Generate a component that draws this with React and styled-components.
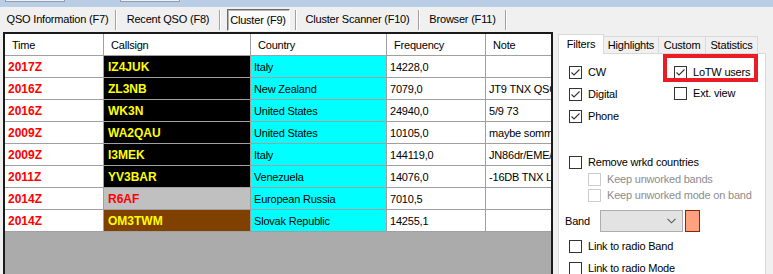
import styled, { createGlobalStyle } from 'styled-components'

const GlobalStyle = createGlobalStyle`
  html, body {
    margin: 0;
    padding: 0;
  }
  body {
    width: 773px;
    height: 274px;
    overflow: hidden;
    background: #f0f0f0;
    font-family: 'Liberation Sans', Arial, sans-serif;
    font-size: 11px;
    letter-spacing: -0.2px;
    color: #000;
  }
`

const Window = styled.div`
  display: flex;
  flex-direction: column;
  height: 274px;
  overflow: hidden;
`

const TopBar = styled.div`
  height: 7px;
  flex-shrink: 0;
  background: #b9cde5;
  display: flex;
  gap: 55px;
  padding-left: 5px;
`

const TopStub = styled.div`
  width: 58px;
  height: 1px;
  background: #f0f0f0;
  border: 1px solid #8d9db2;
  border-top: none;
`

const ToolStrip = styled.div`
  height: 25px;
  flex-shrink: 0;
  display: flex;
  align-items: center;
`

const ToolTab = styled.div`
  width: ${p => p.$w}px;
  height: 25px;
  display: flex;
  align-items: center;
  justify-content: center;
  padding-bottom: 1px;
  box-sizing: border-box;
  white-space: nowrap;
`

const ToolTabActive = styled.div`
  width: 63px;
  height: 22px;
  margin-top: 1px;
  box-sizing: border-box;
  display: flex;
  align-items: center;
  justify-content: center;
  background: #fafafa;
  border-top: 1px solid #6b6b6b;
  border-left: 1px solid #6b6b6b;
  border-bottom: 1px solid #fff;
  border-right: 1px solid #fff;
  box-shadow: inset 1px 1px 0 #b4b4b4;
`

const Separator = styled.div`
  width: 1px;
  height: 20px;
  background: #a0a0a0;
  border-right: 1px solid #fff;
`

const Main = styled.div`
  flex: 1;
  display: flex;
  align-items: flex-start;
  overflow: hidden;
`

const Grid = styled.div`
  margin-left: 3px;
  width: 550px;
  height: 260px;
  box-sizing: border-box;
  border: 2px solid #1a1a1a;
  background: #ababab;
  overflow: hidden;
`

const GridRow = styled.div`
  display: grid;
  grid-template-columns: 99px 147px 136px 99px 1fr;
  height: 22px;
`

const Cell = styled.div`
  display: flex;
  align-items: center;
  box-sizing: border-box;
  padding-left: ${p => p.$pad ?? 3}px;
  border-right: 1px solid #a0a0a0;
  border-bottom: 1px solid #a0a0a0;
  background: ${p => p.$bg || '#fff'};
  color: ${p => p.$color || '#000'};
  font-size: ${p => (p.$bold ? 12 : 11)}px;
  font-weight: ${p => (p.$bold ? 700 : 400)};
  letter-spacing: ${p => (p.$bold ? 0 : -0.2)}px;
  white-space: nowrap;
  overflow: hidden;

  &:last-child {
    border-right: none;
  }
`

const HeadCell = styled(Cell)`
  padding-left: 7px;
`

const Side = styled.div`
  margin-left: 5px;
  margin-top: 1px;
  width: 208px;
  height: 250px;
  display: flex;
  flex-direction: column;
`

const PanelTabs = styled.div`
  height: 20px;
  display: flex;
  align-items: flex-end;
`

const PanelTab = styled.div`
  width: ${p => p.$w}px;
  height: ${p => (p.$active ? 20 : 17)}px;
  margin-bottom: ${p => (p.$active ? -1 : 0)}px;
  margin-left: ${p => (p.$first ? 0 : -1)}px;
  box-sizing: border-box;
  display: flex;
  align-items: center;
  justify-content: center;
  border: 1px solid #d9d9d9;
  border-bottom: none;
  background: ${p => (p.$active ? '#fff' : '#f0f0f0')};
  position: relative;
  z-index: ${p => (p.$active ? 1 : 0)};
  padding-bottom: ${p => (p.$active ? 2 : 0)}px;
`

const PanelBody = styled.div`
  flex: 1;
  position: relative;
  background: #fff;
  border: 1px solid #d9d9d9;
  padding: 7px 0 0 10px;
`

const Columns = styled.div`
  display: flex;
`

const Column = styled.div`
  width: ${p => p.$w}px;
  display: flex;
  flex-direction: column;
`

const CheckRow = styled.div`
  height: ${p => p.$h || 22}px;
  margin-top: ${p => p.$mt || 0}px;
  padding-left: ${p => p.$indent || 0}px;
  display: flex;
  align-items: center;
  gap: 6px;
  white-space: nowrap;
  color: ${p => (p.$disabled ? '#8d8d8d' : '#000')};
`

const Box = styled.span`
  width: 13px;
  height: 13px;
  box-sizing: border-box;
  border: 1px solid ${p => (p.$disabled ? '#cccccc' : '#333')};
  background: #fff;
  display: inline-flex;
  align-items: center;
  justify-content: center;
  flex-shrink: 0;
`

const Highlight = styled.div`
  position: absolute;
  left: 104px;
  top: 0;
  width: 95px;
  height: 28px;
  box-sizing: border-box;
  border: 4px solid #ec1c24;
`

const BandRow = styled.div`
  height: 22px;
  margin-top: 7px;
  margin-left: -4px;
  display: flex;
  align-items: center;
`

const BandLabel = styled.span`
  width: 35px;
`

const Combo = styled.div`
  width: 83px;
  height: 22px;
  box-sizing: border-box;
  background: #e3e3e3;
  border: 1px solid #adadad;
  display: flex;
  align-items: center;
  justify-content: flex-end;
  padding-right: 6px;
`

const Swatch = styled.div`
  width: 15px;
  height: 22px;
  margin-left: 2px;
  box-sizing: border-box;
  background: #ffa07e;
  border: 1px solid #7f2a0a;
`

function Checkbox({ checked, disabled }) {
  return (
    <Box $disabled={disabled}>
      {checked && (
        <svg width="11" height="11" viewBox="0 0 11 11">
          <polyline points="1.5,5.5 4,8 9.5,2.5" fill="none" stroke="#333" strokeWidth="1.1" />
        </svg>
      )}
    </Box>
  )
}

function Check({ label, checked, disabled, h, mt, indent }) {
  return (
    <CheckRow $h={h} $mt={mt} $indent={indent} $disabled={disabled}>
      <Checkbox checked={checked} disabled={disabled} />
      <span>{label}</span>
    </CheckRow>
  )
}

const spots = [
  { time: '2017Z', call: 'IZ4JUK', country: 'Italy', freq: '14228,0', note: '' },
  { time: '2016Z', call: 'ZL3NB', country: 'New Zealand', freq: '7079,0', note: 'JT9 TNX QSO' },
  { time: '2016Z', call: 'WK3N', country: 'United States', freq: '24940,0', note: '5/9 73' },
  { time: '2009Z', call: 'WA2QAU', country: 'United States', freq: '10105,0', note: 'maybe sommerfest' },
  { time: '2009Z', call: 'I3MEK', country: 'Italy', freq: '144119,0', note: 'JN86dr/EME/JT65' },
  { time: '2011Z', call: 'YV3BAR', country: 'Venezuela', freq: '14076,0', note: '-16DB TNX LoTW' },
  { time: '2014Z', call: 'R6AF', country: 'European Russia', freq: '7010,5', note: '', bg: '#c0c0c0', color: '#ff0000' },
  { time: '2014Z', call: 'OM3TWM', country: 'Slovak Republic', freq: '14255,1', note: '', bg: '#804000' },
]

export default function App() {
  return (
    <Window>
      <GlobalStyle />
      <TopBar>
        <TopStub />
        <TopStub />
      </TopBar>
      <ToolStrip>
        <ToolTab $w={115}>QSO Information (F7)</ToolTab>
        <Separator />
        <ToolTab $w={102}>Recent QSO (F8)</ToolTab>
        <Separator />
        <ToolTab $w={74}>
          <ToolTabActive>Cluster (F9)</ToolTabActive>
        </ToolTab>
        <Separator />
        <ToolTab $w={121}>Cluster Scanner (F10)</ToolTab>
        <Separator />
        <ToolTab $w={85}>Browser (F11)</ToolTab>
        <Separator />
      </ToolStrip>
      <Main>
        <Grid>
          <GridRow>
            <HeadCell>Time</HeadCell>
            <HeadCell>Callsign</HeadCell>
            <HeadCell>Country</HeadCell>
            <HeadCell>Frequency</HeadCell>
            <HeadCell>Note</HeadCell>
          </GridRow>
          {spots.map((s, i) => (
            <GridRow key={i}>
              <Cell $bold $color="#ff0000">{s.time}</Cell>
              <Cell $bold $pad={4} $bg={s.bg || '#000'} $color={s.color || '#ffff00'}>{s.call}</Cell>
              <Cell $bg="#00ffff">{s.country}</Cell>
              <Cell>{s.freq}</Cell>
              <Cell>{s.note}</Cell>
            </GridRow>
          ))}
        </Grid>
        <Side>
          <PanelTabs>
            <PanelTab $w={46} $first $active>Filters</PanelTab>
            <PanelTab $w={56}>Highlights</PanelTab>
            <PanelTab $w={48}>Custom</PanelTab>
            <PanelTab $w={53}>Statistics</PanelTab>
          </PanelTabs>
          <PanelBody>
            <Highlight />
            <Columns>
              <Column $w={105}>
                <Check label="CW" checked />
                <Check label="Digital" checked />
                <Check label="Phone" checked />
              </Column>
              <Column $w={90}>
                <Check label="LoTW users" checked h={20} mt={1} />
                <Check label="Ext. view" />
              </Column>
            </Columns>
            <Check label="Remove wrkd countries" h={18} mt={26} />
            <Check label="Keep unworked bands" disabled h={16} indent={19} />
            <Check label="Keep unworked mode on band" disabled h={16} indent={19} />
            <BandRow>
              <BandLabel>Band</BandLabel>
              <Combo>
                <svg width="9" height="6" viewBox="0 0 9 6">
                  <polyline points="0.5,0.8 4.5,4.8 8.5,0.8" fill="none" stroke="#5a5a5a" strokeWidth="1.1" />
                </svg>
              </Combo>
              <Swatch />
            </BandRow>
            <Check label="Link to radio Band" mt={3} />
            <Check label="Link to radio Mode" />
          </PanelBody>
        </Side>
      </Main>
    </Window>
  )
}
